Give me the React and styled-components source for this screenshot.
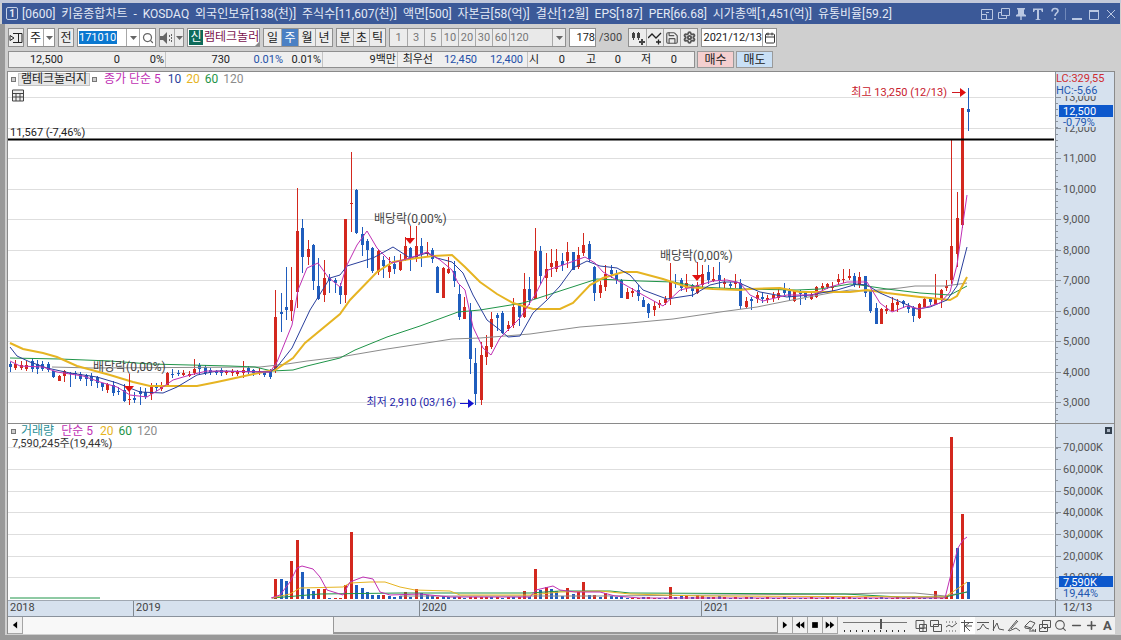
import React from "react";
import styled, { createGlobalStyle } from "styled-components";
import { Search, Save, Settings, Calendar, Plus, Minus } from "lucide-react";

const FONT = 'Roboto, "Noto Sans CJK KR", sans-serif';
const RED = "#d3281e";
const BLUE = "#1f5dbd";
const C = {
  ma5: "#c030b4",
  ma10: "#2a3f9c",
  ma20: "#e6b422",
  ma60: "#1f9448",
  ma120: "#8c8c8c",
  axis: "#d6e1ee",
};

const GlobalStyle = createGlobalStyle`
  *, *::before, *::after { box-sizing: border-box; }
  body { margin: 0; background: #9b9b9b; }
  button, input, select { font: inherit; color: inherit; margin: 0; padding: 0; border-radius: 0; }
`;

const Window = styled.main`
  font-family: ${FONT};
  font-size: 12px;
  line-height: 14px;
  color: #222;
  background: #cfcfcf;
  border-top: 3px solid #c3c9da;
`;

const TitleBar = styled.header`
  display: flex;
  align-items: center;
  height: 21px;
  margin: 0 1px 0 2px;
  padding: 0 3px 0 4px;
  background: #3b5998;
  color: #e4eaf6;
`;

const TitleBadge = styled.span`
  width: 12px;
  height: 13px;
  border: 1px solid #c5d1e8;
  border-radius: 2px;
  font-size: 10px;
  font-weight: bold;
  line-height: 11px;
  text-align: center;
`;

const Title = styled.h1`
  display: flex;
  flex: 0 1 870px;
  justify-content: space-between;
  margin: 0 auto 0 4px;
  font-size: 12px;
  font-weight: normal;
  white-space: nowrap;
`;

const TitleTools = styled.div`
  display: flex;
  align-items: center;
  gap: 4px;
`;

const TitleButton = styled.button`
  display: grid;
  place-items: center;
  width: 13px;
  height: 15px;
  border: 0;
  background: none;
  color: #b9c7e2;
`;

const TitleRule = styled.span`
  width: 1px;
  height: 12px;
  background: #7189ba;
`;

const Frame = styled.div`
  padding: 4px 6px 1px 2px;
  border: solid #999;
  border-width: 0 0 5px 5px;
`;

const Bar = styled.div`
  display: flex;
  gap: ${(p) => p.$gap || 3}px;
  height: ${(p) => p.$h}px;
  margin: 0 0 ${(p) => p.$mb}px 1px;
  white-space: nowrap;
`;

const Group = styled.div`
  display: flex;
  border: 1px solid #8f8f8f;
  background: ${(p) => p.$bg || "#ececec"};
  width: ${(p) => (p.$w ? p.$w + "px" : "auto")};
`;

const ToolButton = styled.button`
  display: grid;
  place-items: center;
  flex: none;
  width: ${(p) => p.$w || 16}px;
  border: 0;
  border-left: ${(p) => (p.$first ? 0 : 1)}px solid #a8a8a8;
  background: ${(p) => (p.$active ? "#4a80c4" : "none")};
  color: ${(p) => (p.$active ? "#fff" : p.$dim ? "#777" : "#222")};
  font-size: ${(p) => (p.$dim ? 11 : 12)}px;
`;

const CodeInput = styled.input`
  width: 38px;
  height: 13px;
  margin: 2px auto 2px 1px;
  border: 0;
  background: #0a78d0;
  color: #fff;
  font-size: 11px;
`;

const Field = styled.input`
  width: ${(p) => p.$w}px;
  border: 0;
  background: #fff;
  font-size: 11px;
  text-align: right;
`;

const PeriodSelect = styled.select`
  appearance: none;
  width: ${(p) => p.$w}px;
  padding: 0 0 0 2px;
  border: 0;
  background: ${(p) => p.$bg || "#fff"};
`;

const StockName = styled.span`
  position: relative;
  width: 55px;
  line-height: 17px;
  color: #7c1450;
  &::after {
    content: "";
    position: absolute;
    right: 0;
    bottom: 0;
    border: 2px solid #888;
    border-top-color: transparent;
    border-left-color: transparent;
  }
`;

const NewTag = styled.span`
  width: 14px;
  margin: 1px;
  line-height: 15px;
  text-align: center;
  background: #0e6b5a;
  color: #fff;
`;

const CountTotal = styled.span`
  width: 26px;
  font-size: 11px;
  line-height: 19px;
  color: #444;
`;

const Quotes = styled.div`
  display: flex;
  border: 1px solid #8f8f8f;
  background: #efefef;
  font-size: 11px;
`;

const QuoteCell = styled.div`
  display: flex;
  line-height: 15px;
  border-right: ${(p) => (p.$last ? 0 : 1)}px solid #c4c4c4;
  padding-right: ${(p) => p.$pad || 1}px;
`;

const Quote = styled.span`
  width: ${(p) => p.$w}px;
  text-align: right;
  color: ${(p) => (p.$blue ? "#2450a8" : "#222")};
`;

const TradeButton = styled.button`
  width: 37px;
  border: 1px solid #9a9a9a;
  background: ${(p) => p.$bg};
`;

const Panel = styled.section`
  border: solid #8a8a8a;
  border-width: 1px 1px 0;
  background: #fff;
`;

const Pane = styled.div`
  position: relative;
  border-bottom: ${(p) => (p.$line ? 1 : 0)}px solid #8a8a8a;
`;

const Chart = styled.svg`
  display: block;
  width: 100%;
  height: auto;
  font-family: ${FONT};
  font-size: 11px;
`;

const NoteText = styled.text`
  font-size: 12px;
`;

const Legend = styled.div`
  position: absolute;
  top: ${(p) => p.$top}px;
  left: ${(p) => p.$left || 3}px;
  display: flex;
  align-items: center;
  gap: 5px;
  font-size: ${(p) => p.$size || 12}px;
  line-height: 13px;
`;

const LegendSet = styled.div`
  display: flex;
  align-items: center;
  gap: ${(p) => p.$gap}px;
  margin-right: 2px;
`;

const Bullet = styled.i`
  width: 5px;
  height: 5px;
  border: 1px solid #777;
  background: #ccc;
`;

const StockTab = styled.button`
  width: 72px;
  height: 13px;
  line-height: 11px;
  border: 1px solid #c4c4c4;
  background: #e6e6e6;
`;

const LegendText = styled.span`
  color: ${(p) => p.$c};
  margin-right: ${(p) => (p.$lead ? 2 : 0)}px;
`;

const ClosePane = styled.button`
  position: absolute;
  top: 3px;
  right: 2px;
  width: 7px;
  height: 7px;
  border: 2px solid #34404e;
  background: #a9b4c2;
`;

const DateAxis = styled.div`
  display: grid;
  grid-template-columns: 125fr 286fr 282fr 354fr 59fr;
  height: 17px;
  border-top: 1px solid #a0a8b2;
  border-bottom: 1px solid #8a929c;
  background: ${C.axis};
  color: #444;
  font-size: 11px;
`;

const DateCell = styled.span`
  padding-left: ${(p) => (p.$last ? 7 : 2)}px;
  border-left: ${(p) => (p.$first ? 0 : 1)}px solid #808890;
`;

const Footer = styled.footer`
  display: flex;
  align-items: stretch;
  height: 17px;
  background: #f0f0f0;
  border-left: 1px solid #8a8a8a;
`;

const StepButton = styled.button`
  display: grid;
  place-items: center;
  width: 15px;
  flex: none;
  border: 1px solid #a5a5a5;
  border-width: 0 1px 1px 0;
  background: #f0f0f0;
`;

const Track = styled.div`
  display: flex;
  flex: 1;
  background: #f8f8f8;
`;

const Thumb = styled.div`
  width: 59%;
  margin-left: auto;
  border: solid #989898;
  border-width: 0 1px 2px 1px;
  background: #ededed;
`;

const ZoomSlider = styled.input`
  appearance: none;
  flex: none;
  width: 64px;
  height: 15px;
  margin: 0 6px 0 5px;
  background:
    linear-gradient(#777, #777) no-repeat 0 5px / 100% 1px,
    repeating-linear-gradient(90deg, #333 0 1px, transparent 1px 6px) no-repeat 1px 13px / 100% 2px;
  &::-webkit-slider-thumb {
    appearance: none;
    width: 2px;
    height: 10px;
    margin-top: -2px;
    background: #555;
  }
`;

const FootTools = styled.div`
  display: flex;
  justify-content: space-between;
  flex: none;
  width: 202px;
`;

const FootButton = styled.button`
  display: grid;
  place-items: center;
  width: 15px;
  border: 0;
  background: ${(p) => (p.$on ? "#fff" : "none")};
  color: #555;
  font-size: 13px;
  font-weight: bold;
`;

const Caret = () => (
  <svg width="7" height="4" viewBox="0 0 7 4"><path d="M0 0h7L3.500 4z" fill="#666" /></svg>
);

const Glyph = ({ d, fill = "none", size = 14, w = 1 }) => (
  <svg width={size} height={size} viewBox="0 0 14 14" fill={fill} stroke={fill === "none" ? "currentColor" : "none"} strokeWidth={w}>
    <path d={d} />
  </svg>
);

/* Weekly bars: direction, high, body top, body bottom, low (chart units). */
const BARS = `b362 364 367 372,r360 364 368 370,r361 365 368 370,r361 365 369 371,b358 361 369 372,b360 364 369 374,b361 364 369 371,b362 364 370 372,b371 371 377 378,r375 376 381 381,
r370 371 376 382,b372 373 374 387,b371 373 374 379,b372 374 379 381,b374 375 379 386,b373 376 381 386,b376 377 383 388,b383 383 387 391,r383 384 390 393,b381 385 393 396,
b387 391 392 395,b384 390 401 402,r388 399 400 405,b392 398 400 403,b387 391 394 405,b388 392 397 399,r383 385 394 400,b383 386 388 391,r382 386 389 391,r372 373 385 387,
b369 374 375 378,b370 373 374 376,r370 373 375 376,r371 374 376 377,r359 369 373 375,b363 365 369 374,b365 367 373 375,b368 370 372 375,b370 371 373 375,b368 370 373 376,
r370 371 373 375,r369 371 373 376,r370 371 374 376,r361 370 373 378,b366 368 372 374,b369 370 373 376,r368 371 373 375,b371 372 375 377,b369 370 377 379,r290 317 370 373,
b293 312 314 332,b267 307 310 320,r267 300 311 321,r188 231 292 308,b219 228 257 273,r240 249 257 265,b244 245 281 290,b258 286 299 300,r260 278 295 302,b274 278 281 293,
b278 280 283 293,b283 286 295 304,r219 219 295 303,r152 203 204 232,b189 190 233 234,b227 234 245 256,b239 241 250 268,b247 248 271 273,r250 251 272 275,b256 260 266 278,
r257 266 272 278,b256 264 269 274,r254 261 270 271,r237 246 260 261,b247 248 257 271,r226 246 258 262,b238 246 254 267,r242 252 254 257,b248 250 259 263,b266 267 293 293,
r267 268 298 298,r257 269 273 274,b261 271 281 287,b285 294 317 320,r297 307 319 319,b303 311 359 374,b348 363 394 405,r342 355 400 405,r335 346 357 365,r312 319 347 349,
b313 315 318 331,b311 313 333 334,r321 325 329 331,r298 307 325 328,b304 305 317 326,r273 289 317 318,b277 289 300 305,r228 251 299 299,b246 251 276 284,r253 269 278 299,
r249 263 267 277,r249 261 269 272,b253 261 265 271,r242 252 261 268,b252 252 270 270,r247 255 267 269,r233 245 253 256,b241 244 259 262,b266 267 293 301,r281 285 293 298,
r265 274 287 291,b265 270 274 278,b270 274 280 284,b279 280 298 298,r288 292 299 299,r288 291 293 297,b285 290 296 301,b297 300 307 307,b303 304 313 318,r301 306 310 316,
r300 303 305 308,r296 299 303 305,r263 281 299 305,b274 282 284 288,b278 280 288 291,r274 283 288 292,b284 285 291 297,r282 285 293 294,r265 274 285 288,b265 272 280 284,
r267 279 281 282,b262 275 281 288,r278 282 284 288,b282 284 286 290,r274 282 284 288,b279 283 306 309,r297 301 307 308,b297 299 301 310,r292 295 299 303,b292 297 299 303,
r295 298 300 303,r292 295 298 302,r288 293 298 300,b283 290 293 295,b288 291 297 301,r290 291 301 302,b290 292 294 305,b292 293 297 300,r293 295 299 300,r286 287 297 298,
r283 286 288 291,r283 284 287 289,r282 286 288 291,r274 279 282 285,r269 279 280 283,r269 276 278 280,b273 276 285 287,r272 277 285 288,b276 276 293 297,b290 291 311 313,
b303 308 324 324,r308 309 324 324,r305 309 311 314,r297 303 311 311,r299 302 305 312,b300 301 304 308,b303 306 309 313,b306 308 316 322,r303 304 318 319,r298 299 307 307,
b297 299 302 305,r274 298 304 304,r289 290 300 308,r280 286 288 291,r140 246 280 284,r192 218 254 267,r108 108 225 228,b88 109 112 131`
  .split(",")
  .map((s) => {
    const t = s.trim();
    return [t[0] === "r" ? RED : BLUE, ...t.slice(1).split(" ").map(Number)];
  });

/* Volume bar tops, from the first week with visible trading (index 49). */
const VOL_START = 49;
const VOL_BASE = 599;
const VOLS = `r579 b579 b581 r561 r540 b572 b589 b591 r589 r589 b598 r598 r598 r585 r532 b585 b588 b592 b595 b595 r595 b596 b597 b596 r592 b597 r589 b593 b595 b596 r597 b596 b597 b597 r597 b598 r597 r597 r597 r597 b597 r597 b598 r597 b597 r597 r591 b597 r569 b590 r587 b589 b591 b596 r588 b594 r592 r582 b595 r595 b597 r593 b596 b597 b597 b598 r598 r598 b597 r597 r598 b598 b598 r587 b597 b596 r596 b597 r595 r596 b597 r597 b596 r597 b598 r597 b598 r597 b597 r598 b598 r597 b598 r598 b597 r598 b598 b598 r598 r597 r598 b598 r597 r597 b598 r597 r597 b598 r598 r597 b598 r598 b597 b598 r598 r597 b598 r598 b597 r598 b598 b598 r591 r598 r596 r437 b548 r514 b582`.split(" ");
const barX = (i) => Math.round(10 + i * 5.41);

const MA = [
  [C.ma120, 1, "52,367 92,368 260,367 287,364 307,361 340,357 387,349 420,344 452,339 480,338 530,334 580,327 630,323 673,319 720,312 757,307 787,301 830,293 850,290 868,291 900,288 915,286 945,286 967,283"],
  [C.ma60, 1, "10,358 60,359 110,361 150,364 230,366 255,367 272,371 293,370 307,366 340,358 355,350 387,337 420,326 458,312 480,310 523,303 563,290 597,279 640,281 673,282 700,287 740,289 797,290 820,289 850,284 860,285 887,289 920,293 950,295 967,286"],
  [C.ma20, 2, "10,343 23,349 43,353 57,357 77,366 110,375 133,382 150,386 197,386 217,382 240,377 263,372 275,370 293,358 305,343 340,314 350,300 377,272 393,262 410,259 433,256 452,255 465,267 480,282 497,294 513,303 533,309 560,309 573,303 590,285 603,278 623,272 637,272 663,279 687,287 713,289 740,290 750,289 780,288 800,292 827,292 850,292 867,290 887,293 920,297 950,300 957,296 967,277"],
  [C.ma10, 1, "10,347 17,356 30,362 47,368 70,373 97,377 117,383 140,392 163,393 177,387 197,375 217,371 270,372 277,367 292,348 310,310 330,278 340,275 347,266 373,258 393,247 410,258 427,253 437,258 452,262 463,273 473,295 487,320 500,330 508,337 520,336 533,313 547,300 560,286 573,268 587,261 600,266 617,268 630,275 643,290 667,299 693,295 710,285 723,282 737,282 760,292 787,297 810,295 837,290 857,284 867,285 880,293 903,303 917,309 930,307 947,300 957,286 967,247"],
  [C.ma5, 1, "10,361 20,366 43,367 57,372 83,376 100,382 117,387 130,395 147,397 160,389 173,380 190,375 207,371 270,372 277,362 292,325 298,290 307,268 318,263 328,277 340,287 347,265 357,245 367,231 377,248 392,263 410,258 427,252 440,260 452,270 458,283 465,290 473,327 483,348 491,355 500,338 520,318 535,295 548,270 563,265 585,257 595,263 603,272 620,282 643,295 663,306 680,290 693,287 713,281 727,280 740,283 750,295 763,301 787,295 813,295 830,287 847,282 867,282 880,303 892,312 907,306 920,309 940,303 950,292 957,265 967,195"],
];

const VMA = [
  [C.ma120, "400,596 600,596 845,594 880,593 915,593 945,596 967,592"],
  [C.ma60, "10,598 100,598"],
  [C.ma60, "272,598 320,594 400,593 530,593 560,591 610,591 630,593 845,594 900,597 945,597 967,592"],
  [C.ma20, "272,598 290,594 300,588 343,587 350,583 370,582 385,582 400,587 415,590 450,591 460,595 530,595 560,592 600,591 630,594 700,596 945,597 960,587 967,582"],
  [C.ma5, "271,598 280,595 290,582 297,568 302,566 313,569 320,577 327,590 343,595 350,582 363,577 373,579 380,592 390,595 420,594 450,597 530,597 536,590 553,586 560,590 575,592 600,592 615,596 640,598 945,598 951,574 958,548 963,540 967,537"],
];

const PRICES = [13, 12, 11, 10, 9, 8, 7, 6, 5, 4, 3];
const priceY = (k) => Math.round(402 - (k - 3) * 30.5);
const VOLUMES = [70, 60, 50, 40, 30, 20, 10];
const volY = (k) => Math.round(599 - k * 2.17);

const Ticks = ({ from, to, step }) => {
  const ys = [];
  for (let y = from; y < to; y += step) ys.push(y);
  return <path d={ys.map((y) => `M1055 ${Math.round(y) + 0.5}h3`).join("")} stroke="#8a929c" />;
};

const ExDividend = ({ x, y, tx, top, tip }) => (
  <g>
    <NoteText x={tx} y={y} fill="#444">배당락(0,00%)</NoteText>
    <path d={`M${x + 0.5} ${top}V${tip - 4}`} stroke={RED} />
    <path d={`M${x - 5} ${tip - 5}h10l-5 6z`} fill="#e01010" />
  </g>
);

const PriceChart = () => (
  <Chart viewBox="8 72 1106 351" role="img" aria-label="주가 차트">
    {PRICES.map((k) => (
      <path key={k} d={`M8 ${priceY(k) + 0.5}H1054`} stroke="#dedede" />
    ))}
    <rect x="1055" y="72" width="59" height="351" fill={C.axis} />
    <path d="M1055.500 72V423" stroke="#8a929c" />
    <Ticks from={97} to={422} step={6.1} />
    {PRICES.map((k) => (
      <g key={k}>
        <path d={`M1055 ${priceY(k) + 0.5}h6`} stroke="#8a929c" />
        <text x="1063" y={priceY(k) + 4} fill="#555">{k},000</text>
      </g>
    ))}
    <rect x="1061" y="85" width="52" height="11" fill={C.axis} />
    <rect x="1061" y="116" width="52" height="11" fill={C.axis} />
    <text x="1056" y="82" fill="#d02c30">LC:329,55</text>
    <text x="1056" y="94" fill="#2458b0">HC:-5,66</text>
    <rect x="1059" y="105" width="54" height="12" fill="#0d58cc" />
    <text x="1063" y="115" fill="#fff">12,500</text>
    <text x="1063" y="126" fill="#2458b0">-0,79%</text>

    {BARS.map(([c, h, t, b, l], i) => (
      <g key={i} fill={c}>
        <rect x={barX(i)} y={h} width="1" height={l - h} />
        <rect x={barX(i) - 1} y={t} width="3" height={Math.max(1, b - t)} />
      </g>
    ))}
    {MA.map(([c, w, pts]) => (
      <polyline key={c} points={pts} fill="none" stroke={c} strokeWidth={w} />
    ))}
    <path d="M8 139.500H1054" stroke="#000" strokeWidth="2" />
    <text x="10" y="136" fill="#222">11,567 (-7,46%)</text>
    <ExDividend x={129} tx={93} y={371} top={374} tip={391} />
    <ExDividend x={410} tx={374} y={223} top={226} tip={243} />
    <ExDividend x={697} tx={660} y={260} top={262} tip={280} />
    <text x="947" y="96" fill="#c8202c" textAnchor="end">최고 13,250 (12/13)</text>
    <path d="M952 92.500h9" stroke="#d01820" />
    <path d="M960 88l6 4.500-6 4.500z" fill="#e01010" />
    <text x="456" y="406" fill="#1c1ca8" textAnchor="end">최저 2,910 (03/16)</text>
    <path d="M460 403.500h9" stroke="#1414d0" />
    <path d="M468 399l6 4.500-6 4.500z" fill="#1414d0" />
  </Chart>
);

const VolumeChart = () => (
  <Chart viewBox="8 424 1106 176" role="img" aria-label="거래량 차트">
    {VOLUMES.map((k) => (
      <path key={k} d={`M8 ${volY(k) + 0.5}H1054`} stroke="#dedede" />
    ))}
    <rect x="1055" y="424" width="59" height="176" fill={C.axis} />
    <path d="M1055.500 424V600" stroke="#8a929c" />
    <Ticks from={437} to={599} step={10.8} />
    {VOLUMES.map((k) => (
      <g key={k}>
        <path d={`M1055 ${volY(k) + 0.5}h6`} stroke="#8a929c" />
        <text x="1063" y={volY(k) + 4} fill="#555">{k},000K</text>
      </g>
    ))}
    <rect x="1059" y="576" width="54" height="11" fill="#0d58cc" />
    <text x="1063" y="586" fill="#fff">7,590K</text>
    <rect x="1061" y="587" width="52" height="12" fill={C.axis} />
    <text x="1063" y="597" fill="#2458b0">19,44%</text>
    {VOLS.map((v, j) => {
      const top = Number(v.slice(1));
      return (
        <rect key={j} x={barX(j + VOL_START) - 1} y={top} width="3" height={VOL_BASE - top} fill={v[0] === "r" ? RED : BLUE} />
      );
    })}
    {VMA.map(([c, pts]) => (
      <polyline key={pts} points={pts} fill="none" stroke={c} />
    ))}
  </Chart>
);

const TITLE = ["[0600]", "키움종합차트", "-", "KOSDAQ", "외국인보유[138(천)]", "주식수[11,607(천)]", "액면[500]", "자본금[58(억)]", "결산[12월]", "EPS[187]", "PER[66.68]", "시가총액[1,451(억)]", "유통비율[59.2]"];

const ButtonGroup = ({ items, active, w, name }) => (
  <Group role="group" aria-label={name}>
    {items.map((t, i) => (
      <ToolButton key={t} $w={w} $first={i === 0} $active={t === active}>{t}</ToolButton>
    ))}
  </Group>
);

const FOOT_ICONS = [
  ["새 창", "M2 1.500h8v8h-8zM5.500 5.500h7v7h-7zM9 5.500v7M5.500 9h7"],
  ["겹친 창", "M1.500 1.500h8v6h-8zM4.500 5.500h8v7h-8z"],
  ["추세선 묶음", "M1 3h1M4 3h1M7 3h1M10 3h1M1 8l3-2 3 2 5-4M1 12h1M4 12h1M7 12h1M10 12h1"],
  ["고저 표시", "M1 3.500h12M4.500 1v12M5 7h7M9 4l-4 3 5 5"],
  ["평균 표시", "M1 3.500h12M1 11l3-1 3-5 3 4 3 1"],
  ["곡선", "M2.500 1v11M2 11l4-7 2 6 5 1"],
  ["그리기", "M1 12L10 1M4 10l7-8M2 12l7-3 4 3"],
  ["전체 지우기", "M2 7l5-5 5 2-4 6-6-1zM2 7l6 2M7 10v3M9 13v-2h2v2M12.500 10v3"],
  ["이미지", "M4.500 1.500h8v7h-8zM1.500 5.500h8v7h-8zM2 10l3-2 2 2 2-2"],
];

export default function App() {
  return (
    <Window>
      <GlobalStyle />
      <TitleBar>
        <TitleBadge>1</TitleBadge>
        <Title>{TITLE.map((t) => <span key={t}>{t}</span>)}</Title>
        <TitleTools>
          <TitleButton aria-label="도킹"><Glyph d="M1.500 2.500h11v10h-11zM1.500 7.500h5v5M9 5.500H6" /></TitleButton>
          <TitleButton aria-label="창 복제"><Glyph d="M4.500 1.500h8v7h-8zM4 5.500H1.500v6h8V9" /></TitleButton>
          <TitleButton aria-label="고정"><Glyph fill="currentColor" d="M3 1h8v1.500h-1V7l2 1v1.500H7.700V13H6.300V9.500H2V8l2-1V2.500H3z" /></TitleButton>
          <TitleButton aria-label="글꼴"><Glyph fill="currentColor" d="M2 1.500h10V5h-1l-1-2H8v9l1.500.5v.5h-5v-.5L6 12V3H4L3 5H2z" /></TitleButton>
          <TitleButton aria-label="도움말"><Glyph w={1.6} d="M4 4.500q0-3 3-3t3 2.500c0 2-3 2-3 5M7 11v1.800" /></TitleButton>
          <TitleRule />
          <TitleButton aria-label="최소화"><Glyph w={2} d="M2 12h10" /></TitleButton>
          <TitleButton aria-label="최대화"><Glyph d="M2.500 3v9.500h9V3M2 3.500h10M2 4.500h10" /></TitleButton>
          <TitleButton aria-label="닫기"><Glyph d="M3 3l8 8M11 3l-8 8" /></TitleButton>
        </TitleTools>
      </TitleBar>

      <Frame>
        <Bar $h={19} $mb={4}>
          <Group>
            <ToolButton $w={14} $first aria-label="패널"><Glyph d="M4 2.500h9v9H4M1 4.500v5l4-2.500zM9.500 3v8" /></ToolButton>
          </Group>
          <Group $bg="#fff">
            <PeriodSelect $w={15} aria-label="주기"><option>주</option></PeriodSelect>
            <ToolButton $w={11} aria-label="주기 열기"><Caret /></ToolButton>
          </Group>
          <Group><ToolButton $w={14} $first>전</ToolButton></Group>
          <Group $bg="#fff" $w={79}>
            <CodeInput aria-label="종목코드" defaultValue="171010" />
            <ToolButton $w={13} aria-label="종목 목록"><Caret /></ToolButton>
            <ToolButton $w={16} aria-label="검색"><Search size={12} color="#666" strokeWidth={2.5} /></ToolButton>
          </Group>
          <Group>
            <ToolButton $w={14} $first aria-label="소리"><Glyph fill="#666" d="M0 5h3l4-4v12L3 9H0zM9 4h1v2H9zM9 8h1v2H9zM11 3h1v2h-1zM11 6h1v2h-1zM11 9h1v2h-1z" /></ToolButton>
            <ToolButton $w={9} aria-label="소리 설정"><Caret /></ToolButton>
          </Group>
          <Group $bg="#fff">
            <NewTag>신</NewTag>
            <StockName>램테크놀러</StockName>
          </Group>
          <ButtonGroup name="봉 주기" items={["일", "주", "월", "년"]} active="주" w={17} />
          <ButtonGroup name="분 주기" items={["분", "초", "틱"]} w={16} />
          <Group>
            {[1, 3, 5, 10, 20, 30, 60, 120].map((n, i) => (
              <ToolButton key={n} $w={n > 99 ? 20 : 17} $first={i === 0} $dim>{n}</ToolButton>
            ))}
            <PeriodSelect $w={23} $bg="#e8e8e8" disabled aria-label="사용자 주기" />
            <ToolButton $w={13} aria-label="사용자 주기 열기"><Caret /></ToolButton>
          </Group>
          <Group $bg="#fff"><Field $w={25} aria-label="봉 개수" defaultValue="178" /></Group>
          <CountTotal>/300</CountTotal>
          <Group>
            <ToolButton $w={17} $first aria-label="지표 추가"><Glyph fill="#444" d="M2 1h1v1h1v5H3v2H2V7H1V2h1zM7 1h1v1h1v5H8v2H7V7H6V2h1zM10 8h2v2h2v2h-2v2h-2v-2H8v-2h2z" /></ToolButton>
            <ToolButton $w={17} aria-label="선 추가"><Glyph d="M0 7l4-4 4 4 5-5M8 11h5M10.500 8.500v5" w={1.3} /></ToolButton>
            <ToolButton $w={17} aria-label="저장"><Save size={14} color="#555" /></ToolButton>
            <ToolButton $w={17} aria-label="설정"><Settings size={13} color="#555" strokeWidth={3.5} /></ToolButton>
          </Group>
          <Group $bg="#fff">
            <Field $w={60} aria-label="날짜" defaultValue="2021/12/13" />
            <ToolButton $w={14} aria-label="달력"><Calendar size={12} color="#333" /></ToolButton>
          </Group>
        </Bar>

        <Bar $h={17} $mb={3} $gap={2}>
          <Quotes>
            <QuoteCell><Quote $w={54}>12,500</Quote><Quote $w={57}>0</Quote><Quote $w={44}>0%</Quote></QuoteCell>
            <QuoteCell><Quote $w={64}>730</Quote><Quote $w={53} $blue>0.01%</Quote><Quote $w={38}>0.01%</Quote></QuoteCell>
            <QuoteCell><Quote $w={73}>9백만</Quote></QuoteCell>
            <QuoteCell $pad={4}><Quote $w={35}>최우선</Quote><Quote $w={44} $blue>12,450</Quote><Quote $w={46} $blue>12,400</Quote></QuoteCell>
            <QuoteCell $last $pad={17}>
              <Quote $w={11}>시</Quote><Quote $w={26}>0</Quote><Quote $w={31}>고</Quote><Quote $w={25}>0</Quote><Quote $w={30}>저</Quote><Quote $w={26}>0</Quote>
            </QuoteCell>
          </Quotes>
          <TradeButton $bg="#f4cfcf">매수</TradeButton>
          <TradeButton $bg="#c9e0f6">매도</TradeButton>
        </Bar>

        <Panel>
          <Pane $line>
            <PriceChart />
            <Legend $top={1}>
              <LegendSet $gap={2}><Bullet /><StockTab>램테크놀러지</StockTab><Bullet /></LegendSet>
              <LegendText $c={C.ma5} $lead>종가 단순 5</LegendText>
              <LegendText $c={C.ma10}>10</LegendText>
              <LegendText $c={C.ma20}>20</LegendText>
              <LegendText $c={C.ma60}>60</LegendText>
              <LegendText $c={C.ma120}>120</LegendText>
            </Legend>
            <Legend $top={17}>
              <svg width="14" height="13" viewBox="0 0 14 13"><path d="M1.500 1h11v11h-11zM1.500 4.500h11M1.500 8h11M5 4v8M9 4v8" fill="#eee" stroke="#444" /></svg>
            </Legend>
          </Pane>
          <Pane>
            <VolumeChart />
            <Legend $top={1}>
              <LegendSet $gap={5}><Bullet /><LegendText $c="#2a8f96">거래량</LegendText></LegendSet>
              <LegendText $c={C.ma5} $lead>단순 5</LegendText>
              <LegendText $c={C.ma20}>20</LegendText>
              <LegendText $c={C.ma60}>60</LegendText>
              <LegendText $c={C.ma120}>120</LegendText>
            </Legend>
            <Legend $top={13} $left={4} $size={11}><LegendText $c="#333">7,590,245주(19,44%)</LegendText></Legend>
            <ClosePane aria-label="거래량 닫기" />
          </Pane>
          <DateAxis>
            <DateCell $first>2018</DateCell>
            <DateCell>2019</DateCell>
            <DateCell>2020</DateCell>
            <DateCell>2021</DateCell>
            <DateCell $last>12/13</DateCell>
          </DateAxis>
        </Panel>

        <Footer>
          <StepButton aria-label="왼쪽으로"><Glyph fill="#000" size={10} d="M10 2v10L4 7z" /></StepButton>
          <Track><Thumb /></Track>
          <StepButton aria-label="오른쪽으로"><Glyph fill="#000" size={10} d="M4 2v10l6-5z" /></StepButton>
          <StepButton aria-label="뒤로 재생"><Glyph fill="#000" size={10} d="M7 2v10L1 7zM13 2v10L7 7z" /></StepButton>
          <StepButton aria-label="정지"><Glyph fill="#000" size={10} d="M3 3h8v8H3z" /></StepButton>
          <StepButton aria-label="앞으로 재생"><Glyph fill="#000" size={10} d="M1 2v10l6-5zM7 2v10l6-5z" /></StepButton>
          <ZoomSlider type="range" min="0" max="100" defaultValue="60" aria-label="확대 비율" />
          <FootTools>
            {FOOT_ICONS.map(([name, d], i) => (
              <FootButton key={name} aria-label={name} $on={i === 3}><Glyph d={d} /></FootButton>
            ))}
            <FootButton aria-label="돋보기"><Search size={13} strokeWidth={2} /></FootButton>
            <FootButton aria-label="축소"><Minus size={13} strokeWidth={3} /></FootButton>
            <FootButton aria-label="확대"><Plus size={13} strokeWidth={3} /></FootButton>
            <FootButton>A</FootButton>
          </FootTools>
        </Footer>
      </Frame>
    </Window>
  );
}
